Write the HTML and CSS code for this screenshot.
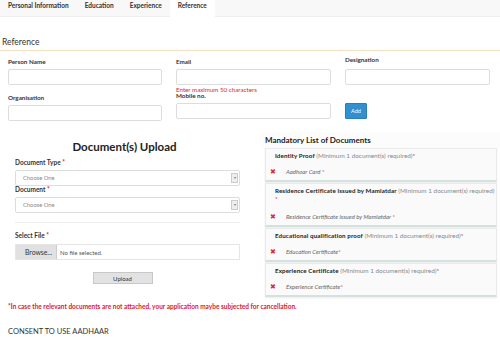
FILE: index.html
```html
<!DOCTYPE html>
<html lang="en">
<head>
  <meta charset="UTF-8">
  <title>Reference</title>
  <link rel="stylesheet" href="styles.css">
</head>
<body>
  <!-- Tabs -->
  <nav class="tabs">
    <a class="tab">Personal Information</a>
    <a class="tab">Education</a>
    <a class="tab">Experience</a>
    <a class="tab active">Reference</a>
  </nav>

  <h2 class="section-title">Reference</h2>

  <!-- Reference form -->
  <div class="ref-grid">
    <div class="field">
      <label>Person Name</label>
      <input type="text" class="box">
    </div>
    <div class="field">
      <label>Email</label>
      <input type="text" class="box">
      <span class="hint">Enter maximum 50 characters</span>
    </div>
    <div class="field">
      <label class="up">Designation</label>
      <input type="text" class="box">
    </div>
    <div class="field">
      <label>Organisation</label>
      <input type="text" class="box">
    </div>
    <div class="field mobile">
      <label>Mobile no.</label>
      <input type="text" class="box">
    </div>
    <div class="field add-wrap">
      <button class="btn-add">Add</button>
    </div>
  </div>

  <!-- Documents -->
  <div class="docs">
    <div class="upload">
      <h3>Document(s) Upload</h3>
      <label>Document Type <span class="req">*</span></label>
      <div class="select">Choose One<span class="arrow">&#9662;</span></div>
      <label>Document <span class="req">*</span></label>
      <div class="select">Choose One<span class="arrow">&#9662;</span></div>
      <hr>
      <label class="file-label">Select File <span class="req">*</span></label>
      <div class="file">
        <span class="browse">Browse...</span>
        <span class="nofile">No file selected.</span>
      </div>
      <div class="upload-row"><button class="btn-upload">Upload</button></div>
    </div>

    <div class="mandatory">
      <div class="m-head">Mandatory List of Documents</div>
      <div class="m-card">
        <div class="m-title"><b>Identity Proof</b> (Minimum 1 document(s) required)<span class="req">*</span></div>
        <div class="m-item"><span class="x">&#10006;</span><i>Aadhoar Card <span class="req">*</span></i></div>
      </div>
      <div class="m-card">
        <div class="m-title"><b>Residence Certificate issued by Mamlatdar</b> (Minimum 1 document(s) required) <span class="req star-line">*</span></div>
        <div class="m-item tall"><span class="x">&#10006;</span><i>Residence Certificate issued by Mamlatdar <span class="req">*</span></i></div>
      </div>
      <div class="m-card">
        <div class="m-title"><b>Educational qualification proof</b> (Minimum 1 document(s) required)<span class="req">*</span></div>
        <div class="m-item"><span class="x">&#10006;</span><i>Education Certificate<span class="req">*</span></i></div>
      </div>
      <div class="m-card">
        <div class="m-title"><b>Experience Certificate</b> (Minimum 1 document(s) required)<span class="req">*</span></div>
        <div class="m-item"><span class="x">&#10006;</span><i>Experience Certificate<span class="req">*</span></i></div>
      </div>
    </div>
  </div>

  <p class="warning">*In case the relevant documents are not attached, your application maybe subjected for cancellation.</p>

  <div class="consent">CONSENT TO USE AADHAAR</div>
</body>
</html>
```

FILE: styles.css
```css
/* Global Reset */
* {
  margin: 0;
  padding: 0;
  box-sizing: border-box;
}
html, body {
  width: 100%;
  background: #fff;
  font-family: 'Lato', 'Open Sans', sans-serif;
  color: #333;
  overflow: hidden;
}
/* Tabs */
.tabs {
  display: flex;
  height: 17px;
  background: #f8f8f8;
  border-bottom: 1px solid #efefef;
}
.tab {
  font-size: 6.5px;
  font-weight: 700;
  color: #333;
  padding: 0 8px;
  line-height: 12px;
}
.tab.active {
  background: #fff;
  height: 18px;
}
/* Section title */
.section-title {
  font-size: 8.5px;
  font-weight: 400;
  color: #333;
  margin-top: 20px;
  padding: 0 0 3px 2px;
  border-bottom: 1px solid #f1dfc2;
}
/* Reference form grid */
.ref-grid {
  display: grid;
  grid-template-columns: 154px 155px 145px;
  column-gap: 14px;
  padding: 7px 0 0 8px;
  align-items: start;
}
.field label {
  display: block;
  font-size: 6.3px;
  font-weight: 700;
  line-height: 8px;
  margin-bottom: 3px;
}
.field label.up { margin-top: -2px; margin-bottom: 5px; }
.box {
  display: block;
  width: 100%;
  height: 16px;
  border: 1px solid #ddd;
  border-radius: 2px;
  background: #fff;
}
.hint {
  display: block;
  font-size: 6.2px;
  color: #d9262b;
  line-height: 8px;
  margin-top: 1px;
}
.field.mobile { margin-top: -2px; }
.add-wrap { padding-top: 9px; }
.btn-add {
  display: block;
  width: 22px;
  height: 16px;
  border: 1px solid #2a7fba;
  background: #3190d0;
  color: #fff;
  font-family: inherit;
  font-size: 5.5px;
  border-radius: 1px;
}
/* Documents area */
.docs {
  display: flex;
  align-items: flex-start;
  margin-top: 5px;
}
.upload {
  width: 248px;
  padding: 14px 8px 0 15px;
}
.upload h3 {
  text-align: center;
  font-size: 11.5px;
  font-weight: 700;
  color: #222;
  line-height: 14px;
  margin-bottom: 5px;
  padding-right: 6px;
}
.upload label {
  display: block;
  font-size: 6.5px;
  font-weight: 700;
  line-height: 8px;
  margin-bottom: 3px;
}
.upload label.file-label { margin-bottom: 4px; }
.req { color: #e0182d; font-style: normal; }
.select {
  position: relative;
  height: 16px;
  border: 1px solid #ddd;
  border-radius: 2px;
  font-size: 5.8px;
  color: #888;
  line-height: 14px;
  padding-left: 7px;
}
.select .arrow {
  position: absolute;
  right: 1px;
  top: 2px;
  width: 7px;
  height: 10px;
  background: #eee;
  border: 1px solid #ccc;
  font-size: 4px;
  line-height: 8px;
  text-align: center;
  color: #777;
}
.upload hr {
  border: 0;
  border-top: 1px solid #eee;
  margin: 9px 0 9px;
}
.file {
  display: flex;
  align-items: center;
  height: 16px;
  border: 1px solid #e6e6e6;
  font-size: 6px;
}
.browse {
  background: #e1e1e1;
  color: #333;
  height: 100%;
  width: 41px;
  padding-left: 9px;
  line-height: 14px;
  font-size: 6.8px;
  border-right: 1px solid #ccc;
}
.nofile { color: #555; padding-left: 3px; }
.upload-row {
  display: flex;
  justify-content: center;
  margin-top: 12px;
  padding-right: 10px;
}
.btn-upload {
  display: block;
  width: 60px;
  height: 12px;
  background: #e2e2e2;
  border: 1px solid #c8c8c8;
  font-family: inherit;
  font-size: 6px;
  color: #333;
}
/* Mandatory list */
.mandatory {
  width: 238px;
  margin-left: 14px;
  margin-top: 6px;
  background: #fff;
}
.m-head {
  font-size: 8px;
  font-weight: 700;
  color: #222;
  padding: 3px 3px;
  line-height: 10px;
  background: #fcfcfc;
}
.m-card {
  margin: 0 3px 1px;
  background: #fafafa;
  border: 1px solid #eaeaea;
  border-bottom: 2px solid #d3e2df;
  box-shadow: 0 1px 2px rgba(0,0,0,0.08);
}
.m-title {
  font-size: 6.4px;
  color: #888;
  padding: 3px 0 4px 9px;
  line-height: 8px;
}
.m-title b { color: #222; font-size: 6.2px; letter-spacing: 0.12px; }
.m-title .star-line { display: block; }
.m-item {
  display: flex;
  align-items: center;
  font-size: 6px;
  color: #666;
  padding: 4px 3px 4px 4px;
  line-height: 8px;
}
.m-item.tall { padding-top: 6px; }
.m-item .x {
  color: #d9302c;
  font-size: 6.5px;
  width: 16px;
  font-style: normal;
}
/* Warning + consent */
.warning {
  font-size: 6.5px;
  font-weight: 700;
  line-height: 8px;
  color: #e0182d;
  padding-left: 8px;
  margin-top: 5px;
}
.consent {
  font-size: 7.5px;
  line-height: 10px;
  color: #333;
  padding-left: 8px;
  margin-top: 16px;
  padding-bottom: 5px;
  border-bottom: 1px solid #eee;
}
```
